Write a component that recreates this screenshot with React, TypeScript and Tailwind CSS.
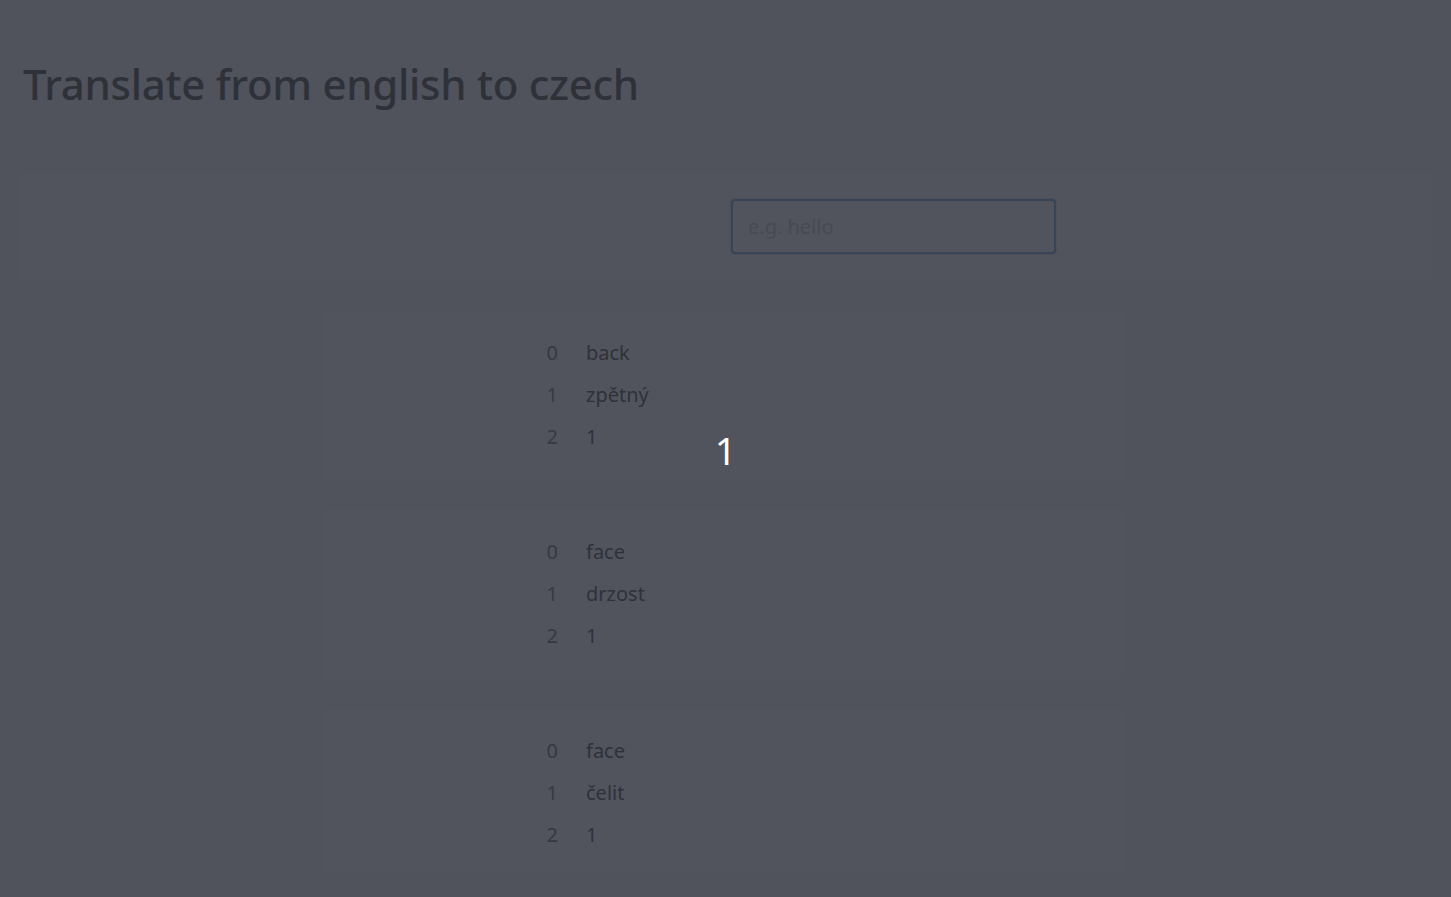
import React from "react";

const cards = [
  ["back", "zpětný", "1"],
  ["face", "drzost", "1"],
  ["face", "čelit", "1"],
];

export default function App() {
  return (
    <div
      className="relative min-h-[897px] w-full overflow-hidden bg-[#50535c]"
      style={{ fontFamily: '"Noto Sans", "Open Sans", sans-serif' }}
    >
      <div className="px-[23px] pt-[56px]">
        <h1 className="text-[42px] font-medium leading-[56px] tracking-[-0.3px] text-[#2f3139]">
          Translate from english to czech
        </h1>
      </div>

      <div className="mx-[18px] mt-[60px] flex h-[108px] items-center bg-[#51545d] pl-[713px]">
        <input
          placeholder="e.g. hello"
          className="h-[55px] w-[325px] rounded-[4px] border-2 border-[#394457] bg-transparent px-[15px] text-[20px] text-[#2f3139] outline-none ring-1 ring-[#4b4f58] placeholder:text-[#474a53]"
        />
      </div>

      <div className="mt-[30px] flex flex-col gap-[29px] pl-[325px]">
        {cards.map((c, i) => (
          <div key={i} className="h-[170px] w-[801px] bg-[#51545d] pt-[22px] pl-[213px]">
            {c.map((v, j) => (
              <div key={j} className="flex h-[42px] items-center text-[20px] text-[#2f3139]">
                <span className="w-[20px] text-right text-[#363941]">{j}</span>
                <span className="ml-[28px]">{v}</span>
              </div>
            ))}
          </div>
        ))}
      </div>

      <div className="absolute left-0 right-0 top-[426px] text-center text-[38px] leading-[48px] text-white">
        1
      </div>
    </div>
  );
}
